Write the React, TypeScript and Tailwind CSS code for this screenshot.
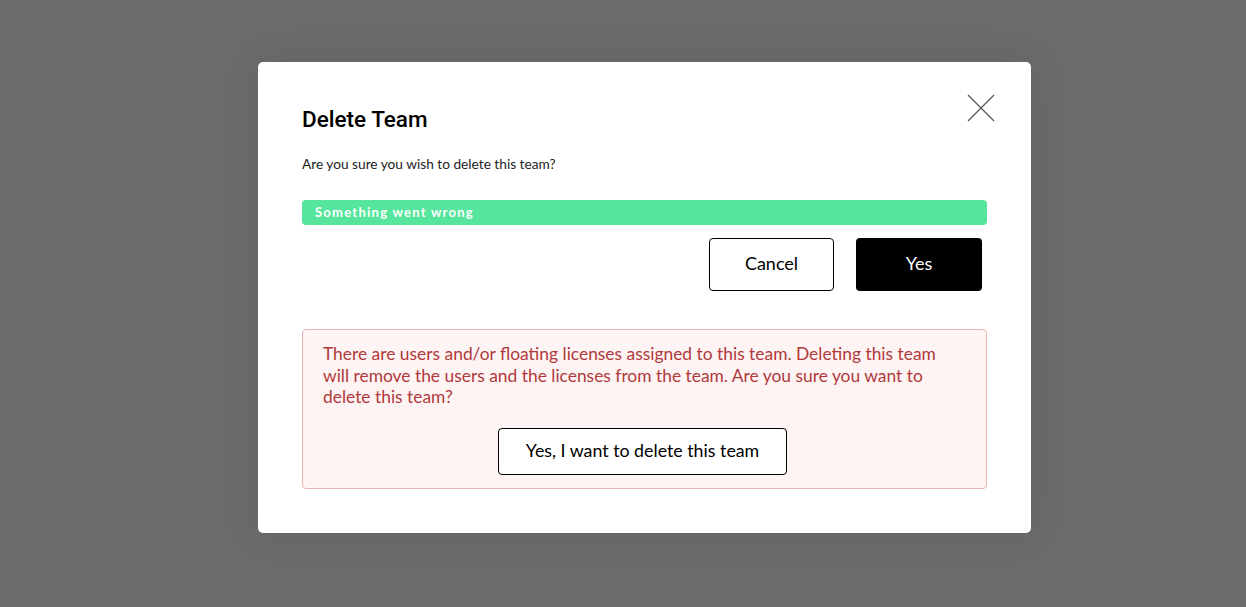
import React from 'react';

export default function App() {
  return (
    <div className="w-full h-[607px] overflow-hidden bg-[#6b6b6b] pl-[258px] pt-[62px] font-['Lato',sans-serif]">
      <div className="relative w-[773px] bg-white rounded-[5px] shadow-[0_0_40px_rgba(0,0,0,0.08)] px-[44px] pt-[44px] pb-[44px]">
        {/* Close */}
        <button className="absolute right-[35px] top-[31px] w-[30px] h-[30px] flex items-center justify-center">
          <svg width="28" height="28" viewBox="0 0 28 28" fill="none">
            <path d="M1 1L27 27M27 1L1 27" stroke="#555" strokeWidth="1.2" />
          </svg>
        </button>

        <h2 className="text-[22.5px] leading-[26px] font-medium text-black font-['Roboto',sans-serif]">Delete Team</h2>
        <p className="mt-[23px] text-[13.7px] leading-[17px] text-[#222]">Are you sure you wish to delete this team?</p>

        <div className="mt-[28px] h-[25px] rounded-[4px] bg-[#55e59c] flex items-center px-[13px]">
          <span className="text-[13px] font-bold text-white tracking-[1.25px]">Something went wrong</span>
        </div>

        <div className="mt-[13px] flex justify-end gap-[22px] pr-[5px]">
          <button className="w-[125px] h-[53px] pb-[2px] rounded-[4px] border border-black bg-white text-[18px] text-black">Cancel</button>
          <button className="w-[126px] h-[53px] pb-[2px] rounded-[4px] bg-black text-[18px] text-white">Yes</button>
        </div>

        <div className="mt-[38px] rounded-[4px] border border-[#e8b4b4] bg-[#fff4f4] pt-[13px] pb-[13px] px-[20px] flex flex-col">
          <p className="pr-[12px] text-[17.4px] leading-[21.5px] text-[#b0393b]">
            There are users and/or floating licenses assigned to this team. Deleting this team will remove the users and the licenses from the team. Are you sure you want to delete this team?
          </p>
          <div className="mt-[20px] flex justify-center pr-[4px]">
            <button className="w-[289px] h-[47px] pb-[1px] rounded-[4px] border border-black bg-white text-[17.8px] text-black">Yes, I want to delete this team</button>
          </div>
        </div>
      </div>
    </div>
  );
}
